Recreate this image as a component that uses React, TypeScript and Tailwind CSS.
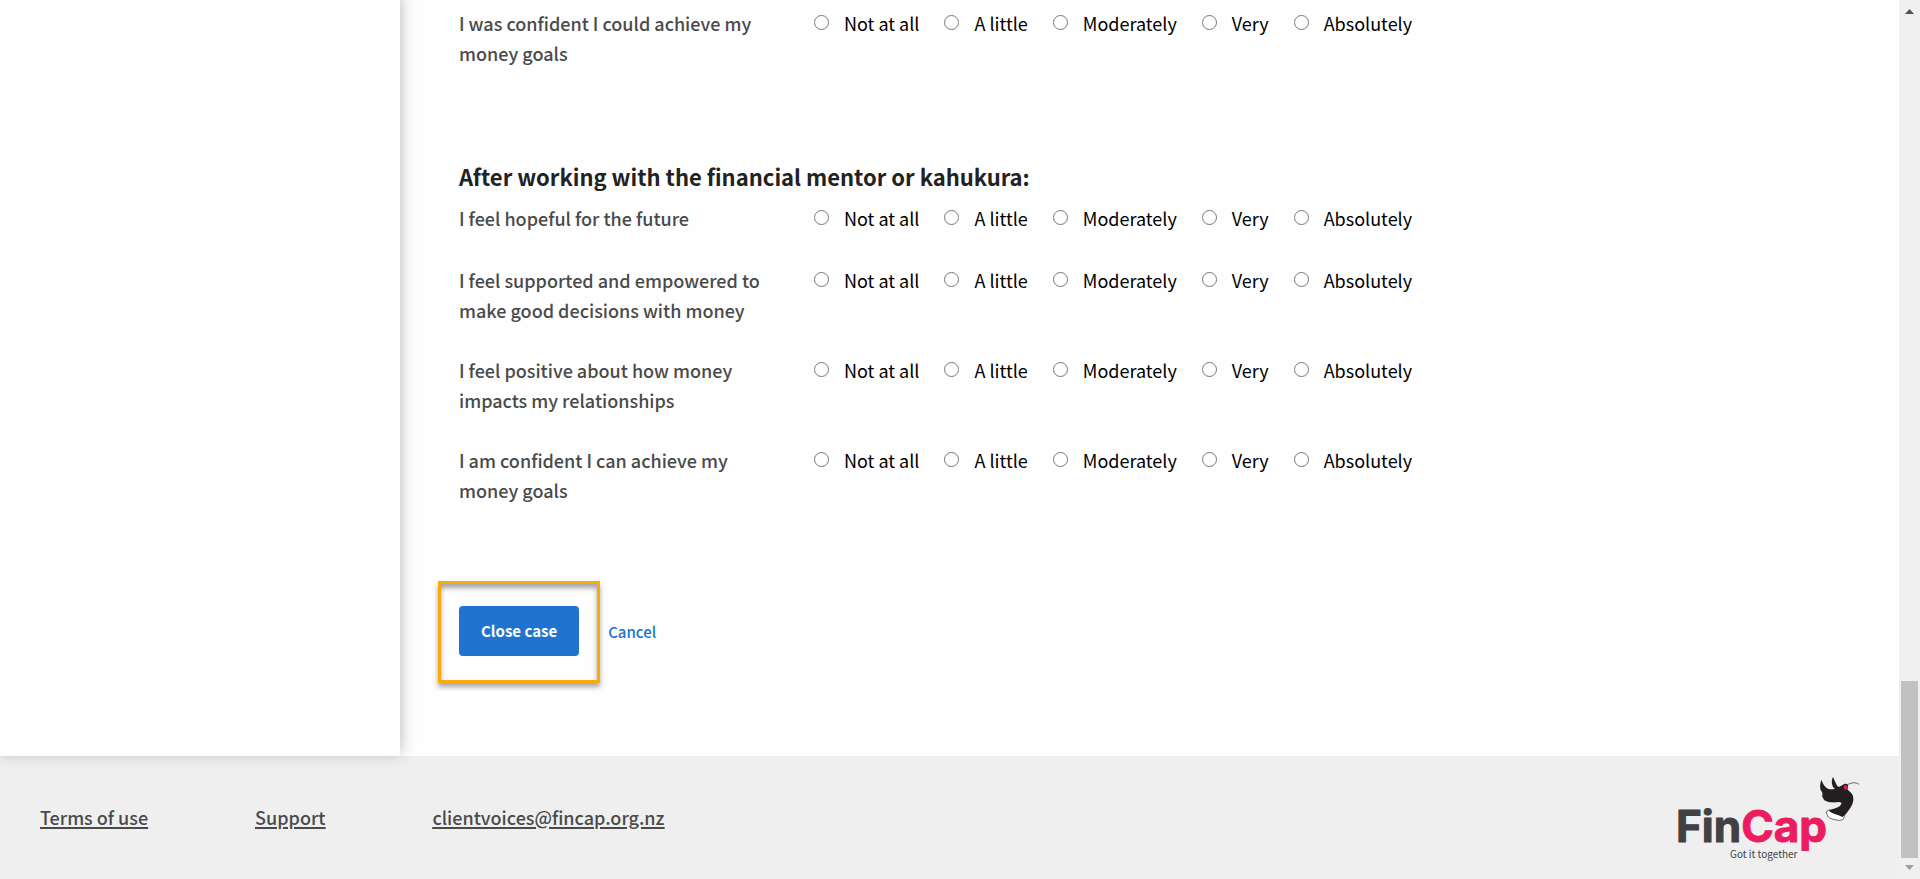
const scale = ["Not at all", "A little", "Moderately", "Very", "Absolutely"];

interface Question {
  id: string;
  text: string;
}

const beforeQuestions: Question[] = [
  { id: "before-goals", text: "I was confident I could achieve my money goals" },
];

const afterQuestions: Question[] = [
  { id: "after-hopeful", text: "I feel hopeful for the future" },
  { id: "after-supported", text: "I feel supported and empowered to make good decisions with money" },
  { id: "after-relationships", text: "I feel positive about how money impacts my relationships" },
  { id: "after-goals", text: "I am confident I can achieve my money goals" },
];

export default function App() {
  return (
    <div className="flex min-h-screen bg-[#fefefe] font-['Noto_Sans_CJK_SC',sans-serif] text-[18px] leading-[30px] text-black">
      <div className="flex min-w-0 flex-1 flex-col">
        <div className="flex flex-1">
          <aside className="z-10 w-[400px] shrink-0 bg-[#fefefe] shadow-[0_-4px_15px_rgba(0,0,0,0.3)]" />
          <main className="min-w-0 flex-1 pt-[8px] pl-[59px]">
            <form>
              <QuestionList questions={beforeQuestions} />
              <h2 className="mt-[90px] mb-[9px] text-[22px] leading-[36px] font-bold text-[#222]">
                After working with the financial mentor or kahukura:
              </h2>
              <QuestionList questions={afterQuestions} />
              <FormActions />
            </form>
          </main>
        </div>
        <Footer />
      </div>
      <ScrollRail />
    </div>
  );
}

function QuestionList({ questions }: { questions: Question[] }) {
  return (
    <div className="flex flex-col gap-[30px]">
      {questions.map((q) => (
        <div key={q.id} role="radiogroup" aria-labelledby={q.id} className="flex min-h-[32px] gap-[35px]">
          <p id={q.id} className="w-[320px] shrink-0 font-medium text-[#4a4a4a]">{q.text}</p>
          <div className="flex items-start gap-[25px]">
            {scale.map((option) => (
              <label key={option} className="flex items-start gap-[15px] whitespace-nowrap">
                <input type="radio" name={q.id} value={option} className="mt-[7px] h-[15px] w-[15px] shrink-0" />
                {option}
              </label>
            ))}
          </div>
        </div>
      ))}
    </div>
  );
}

function FormActions() {
  return (
    <div className="mt-[76px] mb-[73px] -ml-[21px] flex items-center gap-[8px] text-[15px] font-medium">
      <div className="border-3 border-[#fbab09] px-[18px] pt-[22px] pb-[24px] shadow-[0_4px_5px_rgba(0,0,0,0.35),inset_0_4px_5px_rgba(0,0,0,0.35)]">
        <button type="button" className="block h-[50px] rounded-[4px] bg-[#2074cf] px-[22px] font-bold text-white">
          Close case
        </button>
      </div>
      <a href="#cancel" className="text-[#2074cf]">Cancel</a>
    </div>
  );
}

function Footer() {
  return (
    <footer className="flex h-[123px] items-center justify-between bg-[#efefef] px-[40px]">
      <nav className="flex gap-[107px] pb-[2px] font-medium text-[#4a4a4a] underline decoration-2 underline-offset-2">
        <a href="#terms">Terms of use</a>
        <a href="#support">Support</a>
        <a href="mailto:clientvoices@fincap.org.nz">clientvoices@fincap.org.nz</a>
      </nav>
      <FinCapLogo />
    </footer>
  );
}

function FinCapLogo() {
  return (
    <svg viewBox="0 0 182 90" className="h-[90px] w-[182px]" role="img" aria-label="FinCap">
      <text x="-1" y="69" fontFamily="Inter" fontSize="44" fontWeight="700" fill="#414042" stroke="#414042" strokeWidth="1" strokeLinejoin="round">
        Fin<tspan fill="#ec1c62" stroke="#ec1c62">Cap</tspan>
      </text>
      <text x="53" y="85" fontFamily="Noto Sans CJK SC" fontSize="10" fill="#414042">Got it together</text>
      {/* tui in flight */}
      <g transform="translate(138 -2) scale(0.3333)">
        <path
          fill="#fff"
          stroke="#231f20"
          strokeWidth="2"
          d="M44 117C37 119 33 121 34 126C38 131 37 138 44 141C52 142 54 147 62 146C70 150 80 148 84 145C88 140 87 136 90 130Z"
        />
        <path
          fill="#231f20"
          d="M20 26C15 36 14 48 17 57C21 64 24 66 22 72C20 77 24 79 25 83C27 86 28 89 34 90C38 94 45 93 50 94C60 96 72 90 79 95C80 105 67 111 43 117C41 121 47 124 53 127C60 130 72 132 82 138C88 134 92 129 98 122C108 110 116 96 115 82C115 70 107 63 98 57C98 51 100 46 99 42C95 37 88 37 84 41L76 46C70 50 66 46 64 40C60 32 57 25 54 17C50 25 49 36 53 46C55 50 57 52 60 53C50 56 40 55 34 50C26 43 22 36 20 26Z"
        />
        <path fill="#ec1c62" d="M87 44C91 41 96 43 97 47C97 51 95 56 91 57C87 54 88 50 86 47Z" />
        <path fill="none" stroke="#231f20" strokeWidth="2" d="M97 41C106 37 120 31 132 40" />
      </g>
    </svg>
  );
}

function ScrollRail() {
  return (
    <div aria-hidden="true" className="flex w-[21px] shrink-0 flex-col items-center bg-[#f0f0f0]">
      <svg viewBox="0 0 17 21" className="h-[21px] w-[17px]">
        <path fill="#505050" d="M4 14h9L8.500 9z" />
      </svg>
      <div className="mt-auto h-[177px] w-[17px] bg-[#c1c1c1]" />
      <svg viewBox="0 0 17 21" className="h-[21px] w-[17px]">
        <path fill="#a0a0a0" d="M4 7h9L8.500 12z" />
      </svg>
    </div>
  );
}
